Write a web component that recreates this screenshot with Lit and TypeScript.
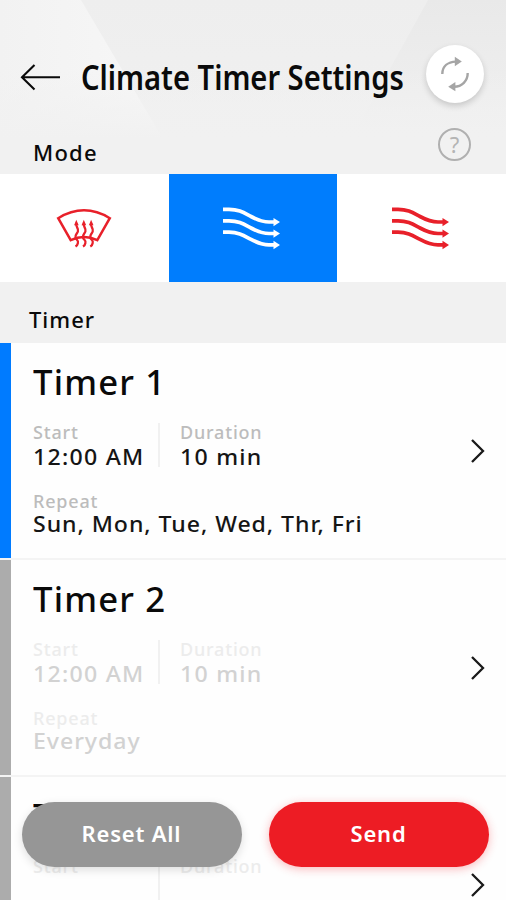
import { LitElement, html, css, svg, nothing } from "lit";
import { customElement, property } from "lit/decorators.js";
import { classMap } from "lit/directives/class-map.js";

interface Timer {
  name: string;
  start?: string;
  duration?: string;
  repeat?: string;
  active: boolean;
}

const TIMERS: Timer[] = [
  { name: "Timer 1", start: "12:00 AM", duration: "10 min", repeat: "Sun, Mon, Tue, Wed, Thr, Fri", active: true },
  { name: "Timer 2", start: "12:00 AM", duration: "10 min", repeat: "Everyday", active: false },
  { name: "Timer 3", active: false },
];

const wave = (y: number) => svg`
  <path d="M1 ${y} H7 C17 ${y} 22 ${y + 3.5} 29 ${y + 7.2} C37 ${y + 11.5} 41 ${y + 12.7} 47 ${y + 12.7} H53"
    fill="none" stroke="currentColor" stroke-width="3.7"/>
  <path d="M51.5 ${y + 8.6} L58 ${y + 12.8} L51.5 ${y + 17} Z" fill="currentColor"/>`;

const airflow = html`<svg width="60" height="46" viewBox="0 0 60 46">${wave(4.3)}${wave(15.8)}${wave(27.2)}</svg>`;

const heat = (x: number) => svg`
  <path d="M${x} 14 C${x - 1.6} 17.5 ${x + 2.6} 19 ${x + 1.4} 22.5 C${x + 0.5} 25 ${x - 1.6} 25.5 ${x - 1} 28.5 C${x - 0.5} 31 ${x + 2.4} 31 ${x + 1.4} 34 Q${x + 1} 36.4 ${x - 1} 37.6"
    fill="none" stroke="currentColor" stroke-width="2.3"/>
  <path d="M${x - 2.4} 16.3 L${x - 0.2} 10.8 L${x + 2.2} 16.3 Z" fill="currentColor"/>`;

const defrost = html`<svg width="56" height="42" viewBox="0 0 56 42">
  <path d="M2.2 9.2 Q28 -6.5 53.8 9.2 L41.3 31.2 Q28 24.8 14.7 31.2 Z" fill="none" stroke="currentColor" stroke-width="2.5"/>
  ${heat(20.5)}${heat(28)}${heat(35.3)}
</svg>`;

@customElement("timer-row")
export class TimerRow extends LitElement {
  @property({ attribute: false }) timer!: Timer;

  static styles = css`
    :host { display: block; }
    .row {
      box-sizing: border-box; height: 217px; display: flex;
      background: #fefefe; border-bottom: 2px solid #f4f4f4;
    }
    .bar { width: 11px; background: #acacac; }
    .active .bar { background: #007bff; }
    .body { flex: 1; padding: 19px 0 0 22px; }
    .name {
      font-size: 34px; line-height: 40px; letter-spacing: 1.15px; font-weight: 500; color: #0a0a0a;
      transform: scaleX(1.02); transform-origin: 0 0;
    }
    .times { display: flex; margin-top: 19px; }
    .start { width: 125px; }
    .duration { position: relative; padding-left: 22px; }
    .duration::before { content: ""; position: absolute; left: 0; top: 2px; width: 2px; height: 44px; background: #f1f1f1; }
    .label { font-size: 18px; line-height: 23px; letter-spacing: 0.8px; color: #ececec; font-weight: 500; }
    .value {
      font-size: 22px; line-height: 25px; letter-spacing: 1.2px; color: #d2d2d2; font-weight: 500;
      white-space: nowrap; transform: scaleX(1.05); transform-origin: 0 0;
    }
    .active .label { color: #bcbcbc; }
    .active .value { color: #151515; }
    .repeat { margin-top: 21px; }
    .repeat .value { line-height: 21px; letter-spacing: 0.9px; }
    .chevron { align-self: center; margin-right: 20px; display: block; color: #1a1a1a; }
  `;

  render() {
    const t = this.timer;
    const value = (v?: string) => (v ? html`<div class="value">${v}</div>` : nothing);
    return html`<div class=${classMap({ row: true, active: t.active })}>
      <div class="bar"></div>
      <div class="body">
        <div class="name">${t.name}</div>
        <div class="times">
          <div class="start"><div class="label">Start</div>${value(t.start)}</div>
          <div class="duration"><div class="label">Duration</div>${value(t.duration)}</div>
        </div>
        ${t.repeat ? html`<div class="repeat"><div class="label">Repeat</div>${value(t.repeat)}</div>` : nothing}
      </div>
      <svg class="chevron" width="16" height="26" viewBox="0 0 16 26">
        <path d="M2 2 L13 13 L2 24" fill="none" stroke="currentColor" stroke-width="2.3"/>
      </svg>
    </div>`;
  }
}

@customElement("app-root")
export class AppRoot extends LitElement {
  static styles = css`
    :host {
      display: block; position: relative; width: 506px; height: 900px; overflow: hidden;
      background: #f1f1f1; color: #0a0a0a; font-family: "Noto Sans", "Open Sans", sans-serif;
    }
    .top { position: relative; height: 174px; }
    .facets { position: absolute; left: 0; top: 0; }
    .header { position: relative; display: flex; height: 124px; box-sizing: border-box; padding: 45px 21px 0 20px; }
    .back { margin-top: 18px; }
    .title {
      margin: 9px 0 0 20px; width: 325px; height: 46px; font-size: 34px; line-height: 46px;
      font-weight: 600; white-space: nowrap; transform: scaleX(0.857); transform-origin: 0 0;
    }
    .refresh {
      margin-left: 20px; width: 58px; height: 58px; border-radius: 50%; background: #fff; flex: none;
      display: flex; align-items: center; justify-content: center; box-shadow: 0 3px 6px rgba(0, 0, 0, 0.17);
    }
    .mode { position: relative; display: flex; justify-content: space-between; padding: 4px 35px 0 33px; }
    .section { font-size: 22px; font-weight: 500; letter-spacing: 1.2px; line-height: 30px; }
    .mode .section { margin-top: 9px; }
    .help {
      box-sizing: border-box; width: 33px; height: 33px; border: 2px solid #b0b0b0; border-radius: 50%;
      color: #b4b4b4; font-size: 22px; line-height: 29px; text-align: center;
    }
    .tiles { display: grid; grid-template-columns: 169px 167.5px 169.5px; height: 108px; background: #fff; }
    .tile { box-sizing: border-box; display: flex; align-items: center; justify-content: center; padding-right: 1px; color: #e8202a; }
    .tile:first-child { padding-top: 3px; }
    .tile.selected { background: #007dfd; color: #fff; }
    .timer-head { height: 61px; box-sizing: border-box; padding: 22px 0 0 29px; letter-spacing: 1px; }
    .actions { position: absolute; left: 22px; right: 17px; top: 802px; display: flex; justify-content: space-between; }
    .button {
      box-sizing: border-box; width: 220px; height: 65px; border-radius: 33px; color: #fff; font-size: 22px;
      line-height: 63px; font-weight: 600; text-align: center; letter-spacing: 0.8px; padding-right: 1px;
    }
    .reset { background: #969696; box-shadow: 0 3px 10px rgba(0, 0, 0, 0.13); }
    .send { background: #ed1c24; box-shadow: 0 2px 10px rgba(237, 28, 36, 0.3); }
  `;

  render() {
    return html`
      <div class="top">
        <svg class="facets" width="506" height="174" viewBox="0 0 506 174">
          <defs>
            <linearGradient id="left" x1="0" y1="0" x2="1" y2="0">
              <stop offset="0" stop-color="#f2f2f2"/><stop offset="1" stop-color="#f7f7f7"/>
            </linearGradient>
            <linearGradient id="mid" x1="0" y1="0" x2="0" y2="1">
              <stop offset="0" stop-color="#eeeeee"/><stop offset="1" stop-color="#f1f1f1"/>
            </linearGradient>
            <linearGradient id="right" x1="0" y1="0" x2="0" y2="1">
              <stop offset="0" stop-color="#e9e9e9"/><stop offset="1" stop-color="#f1f1f1"/>
            </linearGradient>
            <linearGradient id="fade" x1="0" y1="0" x2="0" y2="1">
              <stop offset="0.4" stop-color="#f1f1f1" stop-opacity="0"/><stop offset="0.8" stop-color="#f1f1f1"/>
            </linearGradient>
          </defs>
          <rect width="506" height="174" fill="url(#mid)"/>
          <path d="M0 0 H81 L160 134 V174 H0 Z" fill="url(#left)"/>
          <path d="M428 0 H506 V150 H345 Z" fill="url(#right)"/>
          <rect width="506" height="174" fill="url(#fade)"/>
        </svg>
        <div class="header">
          <svg class="back" width="41" height="28" viewBox="0 0 41 28">
            <path d="M14.5 2 L2 14.3 L14.5 26.5 M2 14.3 H40" fill="none" stroke="#0a0a0a" stroke-width="2.1"/>
          </svg>
          <div class="title">Climate Timer Settings</div>
          <div class="refresh">
            <svg width="34" height="38" viewBox="0 0 34 38" fill="none" stroke="#a5a5a5" stroke-width="2.4">
              <path d="M4.3 19 C4.3 11 10 7 18 6.6"/>
              <path d="M16.8 1.8 L23.8 6.6 L16.8 11.2 Z" fill="#a5a5a5" stroke="none"/>
              <path d="M29.7 18 C29.7 26 24 31.5 16 31.8"/>
              <path d="M17.4 27 L10.2 31.8 L17.4 36.3 Z" fill="#a5a5a5" stroke="none"/>
            </svg>
          </div>
        </div>
        <div class="mode"><div class="section">Mode</div><div class="help">?</div></div>
      </div>
      <div class="tiles">
        <div class="tile">${defrost}</div>
        <div class="tile selected">${airflow}</div>
        <div class="tile">${airflow}</div>
      </div>
      <div class="timer-head section">Timer</div>
      ${TIMERS.map((t) => html`<timer-row .timer=${t}></timer-row>`)}
      <div class="actions">
        <div class="button reset">Reset All</div>
        <div class="button send">Send</div>
      </div>
    `;
  }
}
